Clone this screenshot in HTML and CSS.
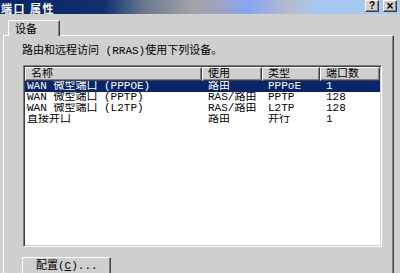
FILE: index.html
```html
<!DOCTYPE html>
<html lang="zh">
<head>
    <meta charset="UTF-8">
    <title>端口 属性</title>
    <link rel="stylesheet" href="styles.css">
</head>
<body>
    <div class="window">
        <div class="titlebar">
            <span class="title">端口 属性</span>
            <div class="title-buttons">
                <span class="tbtn">?</span>
                <span class="tbtn close">×</span>
            </div>
        </div>

        <div class="sheet">
            <div class="tabs">
                <div class="tab">设备</div>
            </div>

            <div class="panel">
                <p class="label">路由和远程访问 (RRAS)使用下列设备。</p>

                <div class="listview">
                    <div class="lv-row lv-header">
                        <div class="hcell">名称</div>
                        <div class="hcell">使用</div>
                        <div class="hcell">类型</div>
                        <div class="hcell">端口数</div>
                    </div>
                    <div class="lv-row selected">
                        <div class="cell first">WAN 微型端口 (PPPOE)</div>
                        <div class="cell">路由</div>
                        <div class="cell">PPPoE</div>
                        <div class="cell">1</div>
                    </div>
                    <div class="lv-row">
                        <div class="cell first">WAN 微型端口 (PPTP)</div>
                        <div class="cell">RAS/路由</div>
                        <div class="cell">PPTP</div>
                        <div class="cell">128</div>
                    </div>
                    <div class="lv-row">
                        <div class="cell first">WAN 微型端口 (L2TP)</div>
                        <div class="cell">RAS/路由</div>
                        <div class="cell">L2TP</div>
                        <div class="cell">128</div>
                    </div>
                    <div class="lv-row">
                        <div class="cell first">直接并口</div>
                        <div class="cell">路由</div>
                        <div class="cell">并行</div>
                        <div class="cell">1</div>
                    </div>
                </div>

                <button class="btn">配置(<u>C</u>)...</button>
            </div>
        </div>
    </div>
</body>
</html>
```

FILE: styles.css
```css
body {
    margin: 0;
    padding: 0;
    width: 400px;
    height: 273px;
    overflow: hidden;
    background-color: #cfcfcf;
    font-family: "Liberation Mono", "Noto Sans CJK SC", monospace;
    font-size: 11px;
    color: #000000;
}

.window {
    width: 400px;
    height: 273px;
    overflow: hidden;
}

.titlebar {
    height: 14px;
    display: flex;
    justify-content: space-between;
    align-items: flex-start;
    background: linear-gradient(90deg,
        #0a246a 0%,
        #10306e 26%,
        #6a7890 36%,
        #a2a2a6 48%,
        #9aa4c8 56%,
        #88a4f2 62%,
        #b4bccc 72%,
        #a6c8f0 80%,
        #a8caf0 100%);
}

.title {
    display: block;
    padding: 1px 0 0 1px;
    height: 13px;
    font-family: "Noto Sans CJK SC", sans-serif;
    font-weight: bold;
    font-size: 11px;
    line-height: 14px;
    color: #ffffff;
    letter-spacing: 1.5px;
}

.title-buttons {
    display: flex;
    gap: 4px;
    padding-right: 3px;
}

.tbtn {
    width: 12px;
    height: 10px;
    background: #d4d0c8;
    border: 1px solid;
    border-color: #ffffff #404040 #404040 #ffffff;
    box-shadow: inset -1px -1px #808080;
    font-family: "Liberation Sans", sans-serif;
    font-weight: bold;
    font-size: 10px;
    line-height: 10px;
    text-align: center;
}

.tbtn.close {
    font-size: 12px;
}

.sheet {
    padding: 6px 0 0 3px;
}

.tabs {
    display: flex;
    padding-left: 5px;
}

.tab {
    position: relative;
    width: 44px;
    height: 15px;
    margin-bottom: -1px;
    padding-left: 6px;
    background: #cfcfcf;
    border-top: 1px solid #ffffff;
    border-left: 1px solid #ffffff;
    border-right: 1px solid #404040;
    box-shadow: inset -1px 0 #808080;
    font-family: "Noto Sans CJK SC", sans-serif;
    line-height: 15px;
}

.panel {
    width: 391px;
    height: 260px;
    padding: 9px 0 0 18px;
    box-sizing: border-box;
    border-top: 1px solid #ffffff;
    border-left: 1px solid #ffffff;
    border-right: 1px solid #404040;
    box-shadow: inset -1px 0 #808080;
}

.label {
    margin: 0;
    height: 13px;
    line-height: 13px;
    white-space: nowrap;
}

.listview {
    margin: 7px 0 0 1px;
    width: 359px;
    height: 182px;
    box-sizing: border-box;
    background: #ffffff;
    border: 1px solid;
    border-color: #808080 #ffffff #ffffff #808080;
    box-shadow: inset 1px 1px #404040, inset -1px -1px #d4d0c8;
    padding: 1px;
}

.lv-row {
    display: grid;
    grid-template-columns: 177px 60px 58px 60px;
    height: 11px;
    line-height: 11px;
    white-space: nowrap;
}

.lv-header {
    height: 14px;
    line-height: 12px;
}

.hcell {
    background: #cfcfcf;
    border: 1px solid;
    border-color: #ffffff #404040 #404040 #ffffff;
    box-shadow: inset -1px -1px #808080;
    padding-left: 5px;
    overflow: hidden;
}

.cell {
    padding-left: 6px;
    overflow: hidden;
}

.cell.first {
    padding-left: 2px;
}

.lv-row.selected {
    background: #0a246a;
    color: #ffffff;
}

.btn {
    display: block;
    margin: 10px 0 0 0;
    width: 89px;
    height: 23px;
    padding: 0 0 6px 13px;
    text-align: left;
    background: #cfcfcf;
    border: 1px solid;
    border-color: #ffffff #404040 #404040 #ffffff;
    box-shadow: inset -1px -1px #808080;
    font-family: "Liberation Mono", "Noto Sans CJK SC", monospace;
    font-size: 11px;
    line-height: 14px;
    color: #000000;
}
```
